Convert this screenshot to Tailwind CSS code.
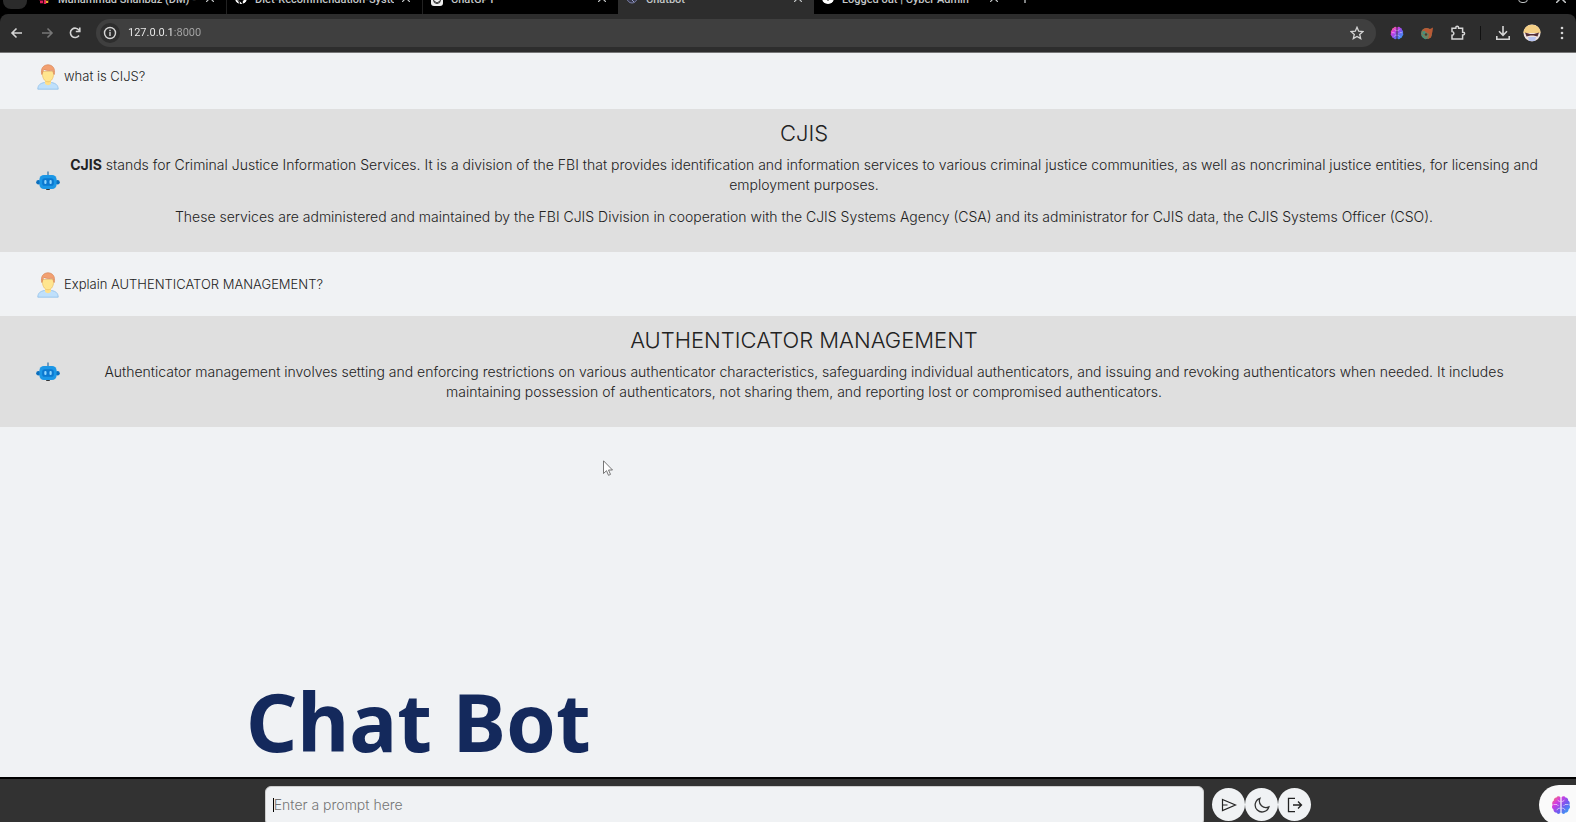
<!DOCTYPE html>
<html lang="en">
<head>
<meta charset="utf-8">
<title>Chatbot</title>
<script src="https://cdn.jsdelivr.net/npm/@tailwindcss/browser@4"></script>
</head>
<body class="relative flex h-screen flex-col overflow-hidden bg-[#f0f2f4] font-['Inter',sans-serif] text-sm leading-5 font-light text-[#222]">
<svg class="absolute size-0">
  <defs>
    <linearGradient id="bg" gradientUnits="userSpaceOnUse" x1="1" y1="1" x2="19" y2="19"><stop offset="0" stop-color="#ff8a4c"/><stop offset=".3" stop-color="#d63be0"/><stop offset=".6" stop-color="#6f5bf0"/><stop offset="1" stop-color="#27b4f5"/></linearGradient>
    <symbol id="brain" viewBox="0 0 20 20">
      <path fill="url(#bg)" d="M9.400 2.200C8.600.8 6.200.8 5.500 2.400 3.700 2.400 2.500 3.900 2.900 5.600 1.200 6.500.8 8.400 1.600 9.900.5 11.300.9 13.500 2.500 14.400 2.400 16.200 3.700 17.600 5.400 17.600 6.300 19.300 8.600 19.300 9.400 17.800Z"/>
      <path fill="url(#bg)" d="M10.600 2.200c.8-1.400 3.200-1.400 3.900.2 1.800 0 3 1.500 2.600 3.200 1.700.9 2.100 2.800 1.300 4.300 1.100 1.400.7 3.600-.9 4.500.1 1.800-1.200 3.200-2.900 3.200-.9 1.700-3.200 1.700-4 .2Z"/>
      <path fill="none" stroke="#fff" stroke-opacity=".65" stroke-width=".9" d="M9.400 6.500C8 6.500 7 5.800 6.600 4.800M2.500 9.500h3.500l1.500 1.500M9.400 13.200C7.500 13 6.300 13.800 5.900 15.200M10.600 6.500c1.400 0 2.400-.7 2.800-1.700M17.500 9.500H14l-1.500 1.500M10.600 13.200c1.900-.2 3.100.6 3.500 2"/>
    </symbol>
    <symbol id="user" viewBox="0 0 22 26">
      <path fill="#bfe0fb" stroke="#8fbfe8" stroke-width=".8" d="M.8 25.200c0-4.200 2.600-6 6.700-6.700h7c4.100.7 6.700 2.500 6.700 6.700Z"/>
      <path fill="#ffe08a" d="M8 15.500h6v4c-1.500 2.300-4.500 2.300-6 0Z"/>
      <path fill="#ffe58f" stroke="#e9bd66" stroke-width=".7" d="M5.300 7.500h11.400c.3 5.500-1.700 10.300-5.700 10.300S5 13 5.300 7.500Z"/>
      <path fill="#f2a071" stroke="#d98657" stroke-width=".7" d="M4.800 10.500C3.300 4.500 6.500.8 11 .8s7.700 3.700 6.200 9.700c-.9-1-.9-2.700-1.500-4.300-2.700.6-6.600.4-8.700-.8-1.400 1.300-1.200 3.700-2.200 5.100Z"/>
    </symbol>
    <symbol id="bot" viewBox="0 0 24 20">
      <path stroke="#2b6fa3" stroke-width="1.200" d="M12 .5V5"/>
      <path fill="#333" d="M10.200 16.500h3.600V19h-3.600z"/>
      <circle cx="2.500" cy="11.300" r="2.300" fill="#0c6fbd"/><circle cx="21.500" cy="11.300" r="2.300" fill="#0c6fbd"/>
      <rect x="3.400" y="4" width="17.200" height="14" rx="4.500" fill="#1c97e6"/>
      <rect x="6.200" y="7.200" width="11.600" height="7.600" rx="2.600" fill="#0b78d0"/>
      <rect x="8.300" y="9" width="2.200" height="4" rx="1" fill="#8fd6ff"/><rect x="13.500" y="9" width="2.200" height="4" rx="1" fill="#8fd6ff"/>
    </symbol>
    <symbol id="x" viewBox="0 0 8 8"><path d="M0 0l8 8M8 0L0 8" stroke="#c4c7c8" stroke-width="1.200"/></symbol>
  </defs>
</svg>

<!-- Browser tab strip, running off the top edge -->
<header class="shrink-0 bg-black font-['Roboto',sans-serif] text-[11px] leading-4 font-medium text-[#c4c7c8]">
  <div class="relative flex h-3.5 items-end pl-[30px]">
    <button aria-label="Search tabs" class="absolute bottom-[5px] left-[3px] size-6 rounded-lg bg-[#2b2b2b]"></button>
    <div class="flex w-[196px] items-end gap-2 pr-3 pb-1.5 pl-2">
      <svg class="mb-1 size-3 shrink-0" viewBox="0 0 12 12"><path d="M1 7h4M7 8v4M2 10h3" stroke="#e01e5a" stroke-width="2.500"/><path d="M7 7h4M9 9v2" stroke="#ecb22e" stroke-width="2.500"/></svg>
      <span class="w-0 grow overflow-hidden whitespace-nowrap">Muhammad Shahbaz (DM) - M</span><button aria-label="Close tab"><svg class="mb-1.5 size-2"><use href="#x"/></svg></button>
    </div>
    <div class="flex w-[196px] items-end gap-2 border-l border-[#222] pr-3 pb-1.5 pl-2">
      <svg class="mb-1 size-3 shrink-0" viewBox="0 0 12 12"><circle cx="6" cy="6" r="6" fill="#fff"/><path d="M4.500 12V9.500Q3 9.500 2.500 8M7.500 12V9q1.500-.5 1.500-3H3q0 2.500 1.500 3" fill="#000" stroke="#000" stroke-width=".6"/></svg>
      <span class="w-0 grow overflow-hidden whitespace-nowrap">Diet-Recommendation-System</span><button aria-label="Close tab"><svg class="mb-1.5 size-2"><use href="#x"/></svg></button>
    </div>
    <div class="flex w-[196px] items-end gap-2 border-l border-[#222] pr-3 pb-1.5 pl-2">
      <svg class="mb-0.5 size-3 shrink-0" viewBox="0 0 12 12"><rect width="12" height="12" rx="3" fill="#eee"/><circle cx="6" cy="6" r="3.500" fill="none" stroke="#333"/><path d="M3 7l3 2 3-2" fill="none" stroke="#333"/></svg>
      <span class="w-0 grow overflow-hidden whitespace-nowrap">ChatGPT</span><button aria-label="Close tab"><svg class="mb-1.5 size-2"><use href="#x"/></svg></button>
    </div>
    <div class="flex w-[196px] items-end gap-2 bg-[#2d2d2d] pr-3 pb-1.5 pl-2">
      <svg class="mb-1 size-3 shrink-0" viewBox="0 0 12 12"><circle cx="6" cy="6" r="5" fill="#35374a" stroke="#7b80a8"/><path d="M3 5l5 5" stroke="#9aa0c8"/></svg>
      <span class="w-0 grow overflow-hidden whitespace-nowrap">Chatbot</span><button aria-label="Close tab"><svg class="mb-1.5 size-2"><use href="#x"/></svg></button>
    </div>
    <div class="flex w-[196px] items-end gap-2 pr-3 pb-1.5 pl-2">
      <svg class="mb-1 size-3 shrink-0" viewBox="0 0 12 12"><circle cx="6" cy="6" r="6" fill="#fff"/><path d="M4 4v3l2 2 2-2V4" fill="#222"/></svg>
      <span class="w-0 grow overflow-hidden whitespace-nowrap">Logged out | Cyber Admin</span><button aria-label="Close tab"><svg class="mb-1.5 size-2"><use href="#x"/></svg></button>
    </div>
    <button aria-label="New tab" class="ml-2.5 pb-[11px]"><svg class="size-2.5" viewBox="0 0 10 10"><path d="M5 0v10M0 5h10" stroke="#c4c7c8" stroke-width="1.300"/></svg></button>
    <div class="ml-auto flex items-end gap-7 pr-2.5 pb-[11px]"><button aria-label="Restore window" class="size-2.5 rounded-sm border border-[#c4c7c8]"></button><button aria-label="Close window"><svg class="size-2.5"><use href="#x"/></svg></button></div>
  </div>
  <!-- Address bar -->
  <div class="flex h-[39px] items-center rounded-t-lg border-b border-[#777] bg-[#2d2d2d] pr-[7px] pl-2.5 text-[#d5d5d5]">
    <button aria-label="Back"><svg class="size-3.5" viewBox="0 0 14 14" fill="none" stroke="currentColor" stroke-width="1.600"><path d="M12 7H2M6.500 2.500L2 7l4.500 4.500"/></svg></button>
    <button aria-label="Forward" class="ml-4 text-[#777]"><svg class="size-3.5" viewBox="0 0 14 14" fill="none" stroke="currentColor" stroke-width="1.600"><path d="M2 7h10M7.500 2.500L12 7l-4.500 4.500"/></svg></button>
    <button aria-label="Reload" class="ml-3.5"><svg class="size-3.5" viewBox="0 0 14 14" fill="none" stroke="currentColor" stroke-width="1.600"><path d="M11 9.500A4.700 4.700 0 1 1 11 4.200M11.800 1.500v4H7.800"/></svg></button>
    <div class="ml-3.5 flex h-7 grow items-center rounded-full bg-[#3f3f3f] pr-3 pl-1">
      <button aria-label="Site information" class="grid size-5 place-items-center rounded-full bg-[#2d2d2d]"><svg class="size-3.5" viewBox="0 0 14 14" fill="none" stroke="currentColor" stroke-width="1.400"><circle cx="7" cy="7" r="5.500"/><path d="M7 6v4M7 3.800v1.400"/></svg></button>
      <label for="url" class="sr-only">Address</label>
      <input id="url" value="127.0.0.1:8000" class="ml-2 block w-0 grow bg-[linear-gradient(90deg,#f0f0f0_46px,#a8a8a8_46px)] bg-clip-text text-[11px] leading-4 font-normal text-transparent outline-none">
      <button aria-label="Bookmark"><svg class="size-3.5" viewBox="0 0 14 14" fill="none" stroke="currentColor" stroke-width="1.300"><path d="M7 1.300l1.700 3.900 4.200.4-3.200 2.800 1 4.200L7 10.400l-3.700 2.200 1-4.200L1.100 5.600l4.200-.4z"/></svg></button>
    </div>
    <button aria-label="Brain extension" class="ml-3.5"><svg class="size-3.5"><use href="#brain"/></svg></button>
    <button aria-label="Extension" class="ml-4"><svg class="size-3.5" viewBox="0 0 14 14"><circle cx="6.500" cy="7.500" r="5.500" fill="#6f8060"/><path d="M2 4.500Q4 1.500 7 2l3 1 3-1.500-.5 4-1.500 6-3 1.500 1-5-3-2z" fill="#b85a35"/><path d="M2 9q1 3 4 4M5 5l-2 2 3 1" stroke="#2e9a8a" fill="none"/><circle cx="6" cy="8.500" r="1.200" fill="#473a30"/></svg></button>
    <button aria-label="Extensions" class="ml-4"><svg class="size-4" viewBox="0 0 16 16" fill="none" stroke="currentColor" stroke-width="1.500"><path d="M2 3.300h3.800V2.700a1.400 1.400 0 0 1 2.800 0v.6h4v3.900h.6a1.400 1.400 0 0 1 0 2.800h-.6v4H2v-3.700c2.500-.2 2.500-3.500 0-3.700z"/></svg></button>
    <span class="mx-3.5 h-3.5 w-px bg-[#111]"></span>
    <button aria-label="Downloads"><svg class="size-4" viewBox="0 0 16 16" fill="none" stroke="currentColor" stroke-width="1.600"><path d="M8 1v9M4 6.300l4 4 4-4M1.800 11v3.200h12.400V11"/></svg></button>
    <button aria-label="Profile" class="ml-3"><svg class="size-[18px]" viewBox="0 0 18 18"><circle cx="9" cy="9" r="8.500" fill="#eee2df"/><path d="M.5 9C.5-2 17.500-2 17.500 9z" fill="#f4cf85"/><path d="M2 8.500l5 1.500h4l5-1.500-1.500 4-4-1h-3l-4 1z" fill="#542f38"/><path d="M5 13h8l-1 4H6z" fill="#b8c4f0"/></svg></button>
    <button aria-label="Menu" class="ml-3.5"><svg class="h-4 w-3.5" viewBox="0 0 14 16" fill="currentColor"><circle cx="7" cy="3" r="1.300"/><circle cx="7" cy="8" r="1.300"/><circle cx="7" cy="13" r="1.300"/></svg></button>
  </div>
</header>

<main class="flex min-h-0 grow flex-col">
  <section class="flex h-14 shrink-0 items-start gap-1 pt-[11px] pl-9 text-[13px]">
    <svg class="h-[26px] w-6 shrink-0"><use href="#user"/></svg><p class="pt-0.5">what is CIJS?</p>
  </section>
  <section class="flex shrink-0 items-center gap-1 bg-[#dfdfdf] pt-2.5 pr-8 pb-[25px] pl-9">
    <svg class="mt-4 h-5 w-6 shrink-0"><use href="#bot"/></svg>
    <div class="grow text-center">
      <h2 class="mb-2 text-[22px] leading-7">CJIS</h2>
      <p class="mb-3"><strong class="font-bold">CJIS</strong> stands for Criminal Justice Information Services. It is a division of the FBI that provides identification and information services to various criminal justice communities, as well as noncriminal justice entities, for licensing and<br>employment purposes.</p>
      <p>These services are administered and maintained by the FBI CJIS Division in cooperation with the CJIS Systems Agency (CSA) and its administrator for CJIS data, the CJIS Systems Officer (CSO).</p>
    </div>
  </section>
  <section class="flex h-16 shrink-0 items-start gap-1 pt-5 pl-9 text-[13px]">
    <svg class="h-[26px] w-6 shrink-0"><use href="#user"/></svg><p class="pt-0.5">Explain AUTHENTICATOR MANAGEMENT?</p>
  </section>
  <section class="flex shrink-0 items-center gap-1 bg-[#dfdfdf] pt-2.5 pr-8 pb-[25px] pl-9">
    <svg class="mt-4 h-5 w-6 shrink-0"><use href="#bot"/></svg>
    <div class="grow text-center">
      <h2 class="mb-2 text-[22px] leading-7">AUTHENTICATOR MANAGEMENT</h2>
      <p>Authenticator management involves setting and enforcing restrictions on various authenticator characteristics, safeguarding individual authenticators, and issuing and revoking authenticators when needed. It includes<br>maintaining possession of authenticators, not sharing them, and reporting lost or compromised authenticators.</p>
    </div>
  </section>
  <h1 class="mt-auto mb-4 pl-[246px] font-['Noto_Sans',sans-serif] text-[80px] leading-[80px] font-bold text-[#14295c]">Chat Bot</h1>
</main>

<footer class="h-[45px] shrink-0 border-t-2 border-black bg-[#323232]">
  <form class="mx-auto flex w-[66.4%] items-start pt-[7px]">
    <label for="prompt" class="sr-only">Prompt</label>
    <div class="relative mr-2 grow">
      <input id="prompt" placeholder="Enter a prompt here" class="h-10 w-full rounded-md border border-[#ccc] bg-[#f0f2f4] px-2 pb-1 placeholder:text-[#757575]">
      <span class="absolute top-3 left-2 h-3.5 w-px bg-black"></span>
    </div>
    <button type="button" aria-label="Send" class="mt-0.5 grid size-[33px] place-items-center rounded-full bg-[#f0f2f4]"><svg class="h-3.5 w-4" viewBox="0 0 16 14" fill="none" stroke="#222" stroke-width="1.200"><path d="M1.500 1.500L14.500 7l-13 5.500zM1.500 7h5"/></svg></button>
    <button type="button" aria-label="Dark mode" class="mt-0.5 grid size-[33px] place-items-center rounded-full bg-[#f0f2f4]"><svg class="size-4" viewBox="0 0 16 16" fill="none" stroke="#333" stroke-width="1.300"><path d="M6 1.300a7 7 0 1 0 8.900 8.600A6.600 6.600 0 0 1 6 1.300z"/></svg></button>
    <button type="button" aria-label="Log out" class="mt-0.5 grid size-[33px] place-items-center rounded-full bg-[#f0f2f4]"><svg class="size-4" viewBox="0 0 16 16" fill="none" stroke="#222" stroke-width="1.300"><path d="M8 1.300H1.500v13.400H8M6 8h8.500M11 4.500L14.500 8 11 11.500"/></svg></button>
  </form>
</footer>

<!-- Floating assistant pill, half off the corner -->
<button aria-label="Open assistant" class="absolute right-0 -bottom-[3px] flex h-10 w-[37px] items-center rounded-l-full bg-[#fafafa] pl-3"><svg class="size-5"><use href="#brain"/></svg></button>
<!-- Mouse pointer -->
<svg class="absolute top-[460px] left-[603px] h-4 w-2.5" viewBox="0 0 10 16" fill="#fff" stroke="#555" stroke-width=".8"><path d="M.5.800v12.700l3-2.800 2 4.600 2-.9-2-4.400h4z"/></svg>
</body>
</html>
